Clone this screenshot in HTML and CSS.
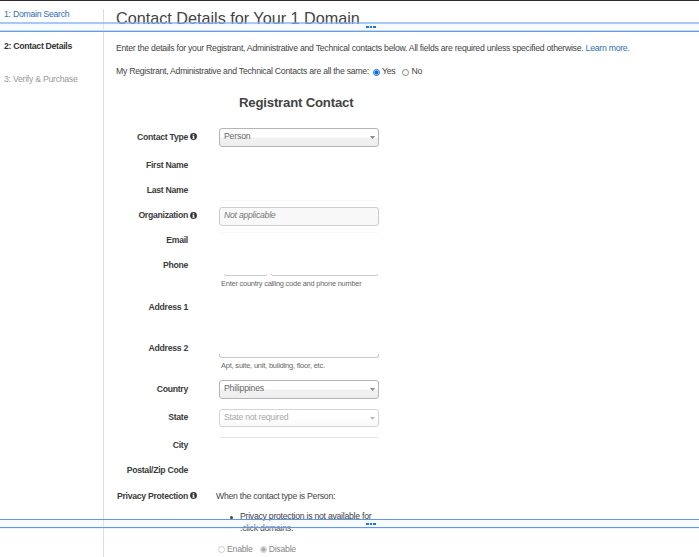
FILE: index.html
```html
<!DOCTYPE html>
<html lang="en">
<head>
<meta charset="utf-8">
<title>Contact Details</title>
<link rel="stylesheet" href="styles.css">
</head>
<body>
<svg width="0" height="0" class="defs"><symbol id="info" viewBox="0 0 14 14"><circle cx="7" cy="7" r="6.8" fill="#333"/><path d="M5.4 2.3h3.1v2.1H5.4zM4.7 5.5h3.8v4.3h1v1.6H4.6V9.8h1V7.1h-.9z" fill="#fff"/></symbol></svg>
<div class="page">
  <nav class="steps">
    <a class="step link">1: Domain Search</a>
    <div class="step current">2: Contact Details</div>
    <div class="step later">3: Verify &amp; Purchase</div>
  </nav>
  <main>
    <h1>Contact Details for Your 1 Domain</h1>
    <p class="intro">Enter the details for your Registrant, Administrative and Technical contacts below. All fields are required unless specified otherwise. <a class="link">Learn more.</a></p>
    <div class="same"><span>My Registrant, Administrative and Technical Contacts are all the same:</span><i class="radio on"></i><span class="yes">Yes</span><i class="radio"></i><span>No</span></div>
    <h2>Registrant Contact</h2>
    <div class="form">
      <div class="row low r28"><label>Contact Type</label><svg class="info"><use href="#info"/></svg><div class="control"><div class="select">Person<i class="caret"></i></div></div></div>
      <div class="row low r25"><label>First Name</label></div>
      <div class="row low r26"><label>Last Name</label><div class="control"><div class="edge trace"></div></div></div>
      <div class="row r25"><label>Organization</label><svg class="info"><use href="#info"/></svg><div class="control"><div class="select na">Not applicable</div></div></div>
      <div class="row r25"><label>Email</label><div class="control"><div class="edge trace email"></div></div></div>
      <div class="row r42"><label>Phone</label><div class="control"><div class="phone"><i></i><i></i></div><small>Enter country calling code and phone number</small></div></div>
      <div class="row r41"><label>Address 1</label></div>
      <div class="row r40"><label>Address 2</label><div class="control"><div class="address"></div><small class="apt">Apt, suite, unit, building, floor, etc.</small></div></div>
      <div class="row low r29"><label>Country</label><div class="control"><div class="select">Philippines<i class="caret"></i></div></div></div>
      <div class="row r28"><label>State</label><div class="control"><div class="select disabled">State not required<i class="caret"></i></div></div></div>
      <div class="row r25"><label>City</label><div class="control"><div class="edge city"></div></div></div>
      <div class="row r25"><label>Postal/Zip Code</label></div>
      <div class="row low"><label>Privacy Protection</label><svg class="info"><use href="#info"/></svg>
        <div class="control privacy"><p>When the contact type is Person:</p>
          <ul><li>Privacy protection is not available for<br>.click domains.</li></ul>
          <div class="options"><i class="radio"></i><span>Enable</span><i class="radio picked"></i><span>Disable</span></div>
        </div></div>
    </div>
  </main>
</div>
<div class="band top"><span class="dots"><i></i><i></i><i></i></span></div>
<div class="band bottom"><span class="dots"><i></i><i></i><i></i></span></div>
</body>
</html>
```
FILE: styles.css
```css
* { box-sizing: border-box; }
body { margin: 0; background: #fff; color: #444; font: 8.7px/12px "Liberation Sans", Arial, sans-serif; letter-spacing: -.26px; overflow: hidden; }
h1, h2, p, ul { margin: 0; padding: 0; font-weight: normal; }
.defs { position: absolute; }
.page { display: flex; height: 557px; border-top: 1px solid #2f292d; white-space: nowrap; }
.steps { width: 104px; flex: none; margin-top: 8px; border-right: 1px solid #ddd; padding-left: 4px; }
.step { display: block; height: 32.4px; line-height: 11px; }
.link { color: #2b70bd; }
.current { font-weight: bold; color: #333; letter-spacing: -.3px; }
.later { color: #999; }
main { padding-left: 12px; width: 595px; }
h1 { height: 30px; border-bottom: 1px solid #ccc; font-size: 16.2px; line-height: 35px; letter-spacing: 0; }
.intro { margin-top: 11px; }
.same { display: flex; height: 12px; margin-top: 11px; align-items: center; }
.radio { width: 7px; height: 7px; border: 1px solid #888; border-radius: 50%; margin: 2px 2px 0 4px; flex: none; }
.yes { margin-right: 3px; }
.on { border-color: #1675e0; background: radial-gradient(circle, #0b6fe5 0 1.8px, #fff 2.4px); }
h2 { font-size: 13.2px; font-weight: bold; line-height: 18px; letter-spacing: -.2px; margin: 17px 0 0 123px; }
.form { margin-top: 12px; }
.row { display: flex; height: 73px; }
.r25 { height: 25px; } .r26 { height: 26px; } .r28 { height: 28px; } .r29 { height: 29px; }
.r40 { height: 40px; } .r41 { height: 41px; } .r42 { height: 42px; }
label { width: 72px; display: flex; justify-content: flex-end; flex: none; font-weight: bold; line-height: 25px; letter-spacing: -.29px; color: #3c3c3c; }
.low label { line-height: 26px; }
.info { width: 7px; height: 7px; margin: 9px -9px 0 2px; flex: none; }
.control { margin-left: 31px; width: 160px; padding-top: 4px; }
.select { display: flex; justify-content: space-between; height: 19px; border: 1px solid #b5b5b5; border-radius: 3px; background: linear-gradient(#fff 0 45%, #f1f1f1 55%, #eee); padding: 0 3px 0 4px; line-height: 15px; letter-spacing: -.18px; color: #666; }
.caret { width: 5px; height: 3px; margin-top: 7px; background: #888; clip-path: polygon(0 0, 100% 0, 50% 100%); }
.na { background: #f8f8f8; border-color: #ccc; color: #777; font-style: italic; letter-spacing: -.26px; }
.disabled { height: 18px; background: linear-gradient(#fff 45%, #f8f8f8); border-color: #d4d4d4; color: #aaa; letter-spacing: -.26px; }
.disabled .caret { background: #bbb; }
.edge { height: 1px; background: #e2e2e2; margin: 0 1px; }
.trace { background: #f8f8f8; margin-top: 19px; }
.email { margin-top: 0; }
.phone { display: flex; gap: 4px; padding: 17px 0 0 5px; }
.phone i { height: 2px; width: 43px; border: 1px solid #ccc; border-top: 0; border-radius: 0 0 2px 2px; }
.phone i + i { width: 107px; }
small { display: block; font-size: 7.4px; line-height: 10px; letter-spacing: -.2px; margin: 3px 0 0 2px; color: #666; }
.apt { letter-spacing: -.17px; }
.address { height: 4px; margin-top: 14px; border: 1px solid #c8c8c8; border-top: 0; border-radius: 0 0 3px 3px; }
.privacy { margin-left: 28px; }
.privacy p { line-height: 18px; }
ul { list-style: none; margin: 5px 0 0 24px; }
li { position: relative; }
li::before { content: ""; position: absolute; left: -10px; top: 6px; width: 3px; height: 3px; border-radius: 50%; background: #444; }
.options { display: flex; align-items: center; margin-top: 9px; color: #888; letter-spacing: -.24px; }
.options .radio { margin: 1px 2px 0 2px; border-color: #ccc; }
.options span + .radio { margin-left: 7px; }
.picked { background: radial-gradient(circle, #aaa 0 1.8px, #eee 2.4px); }
.band { position: absolute; left: 0; width: 100%; background: rgba(232, 241, 255, .35); background-clip: padding-box; }
.top { top: 22px; height: 10px; border-top: 2px solid rgba(130, 178, 244, .7); border-bottom: 1px solid #6d9cda; box-shadow: inset 0 -1px #bfd8fa; }
.bottom { top: 519px; height: 9px; border-top: 1px solid #5f98ea; border-bottom: 1px solid #5f98ea; box-shadow: 0 1px rgba(200, 220, 250, .4); }
.dots { position: absolute; left: 366px; top: 2px; display: flex; gap: 1px; }
.dots i { width: 2.5px; height: 2px; background: #1a73e8; }
.bottom .dots { top: 3px; }
```
